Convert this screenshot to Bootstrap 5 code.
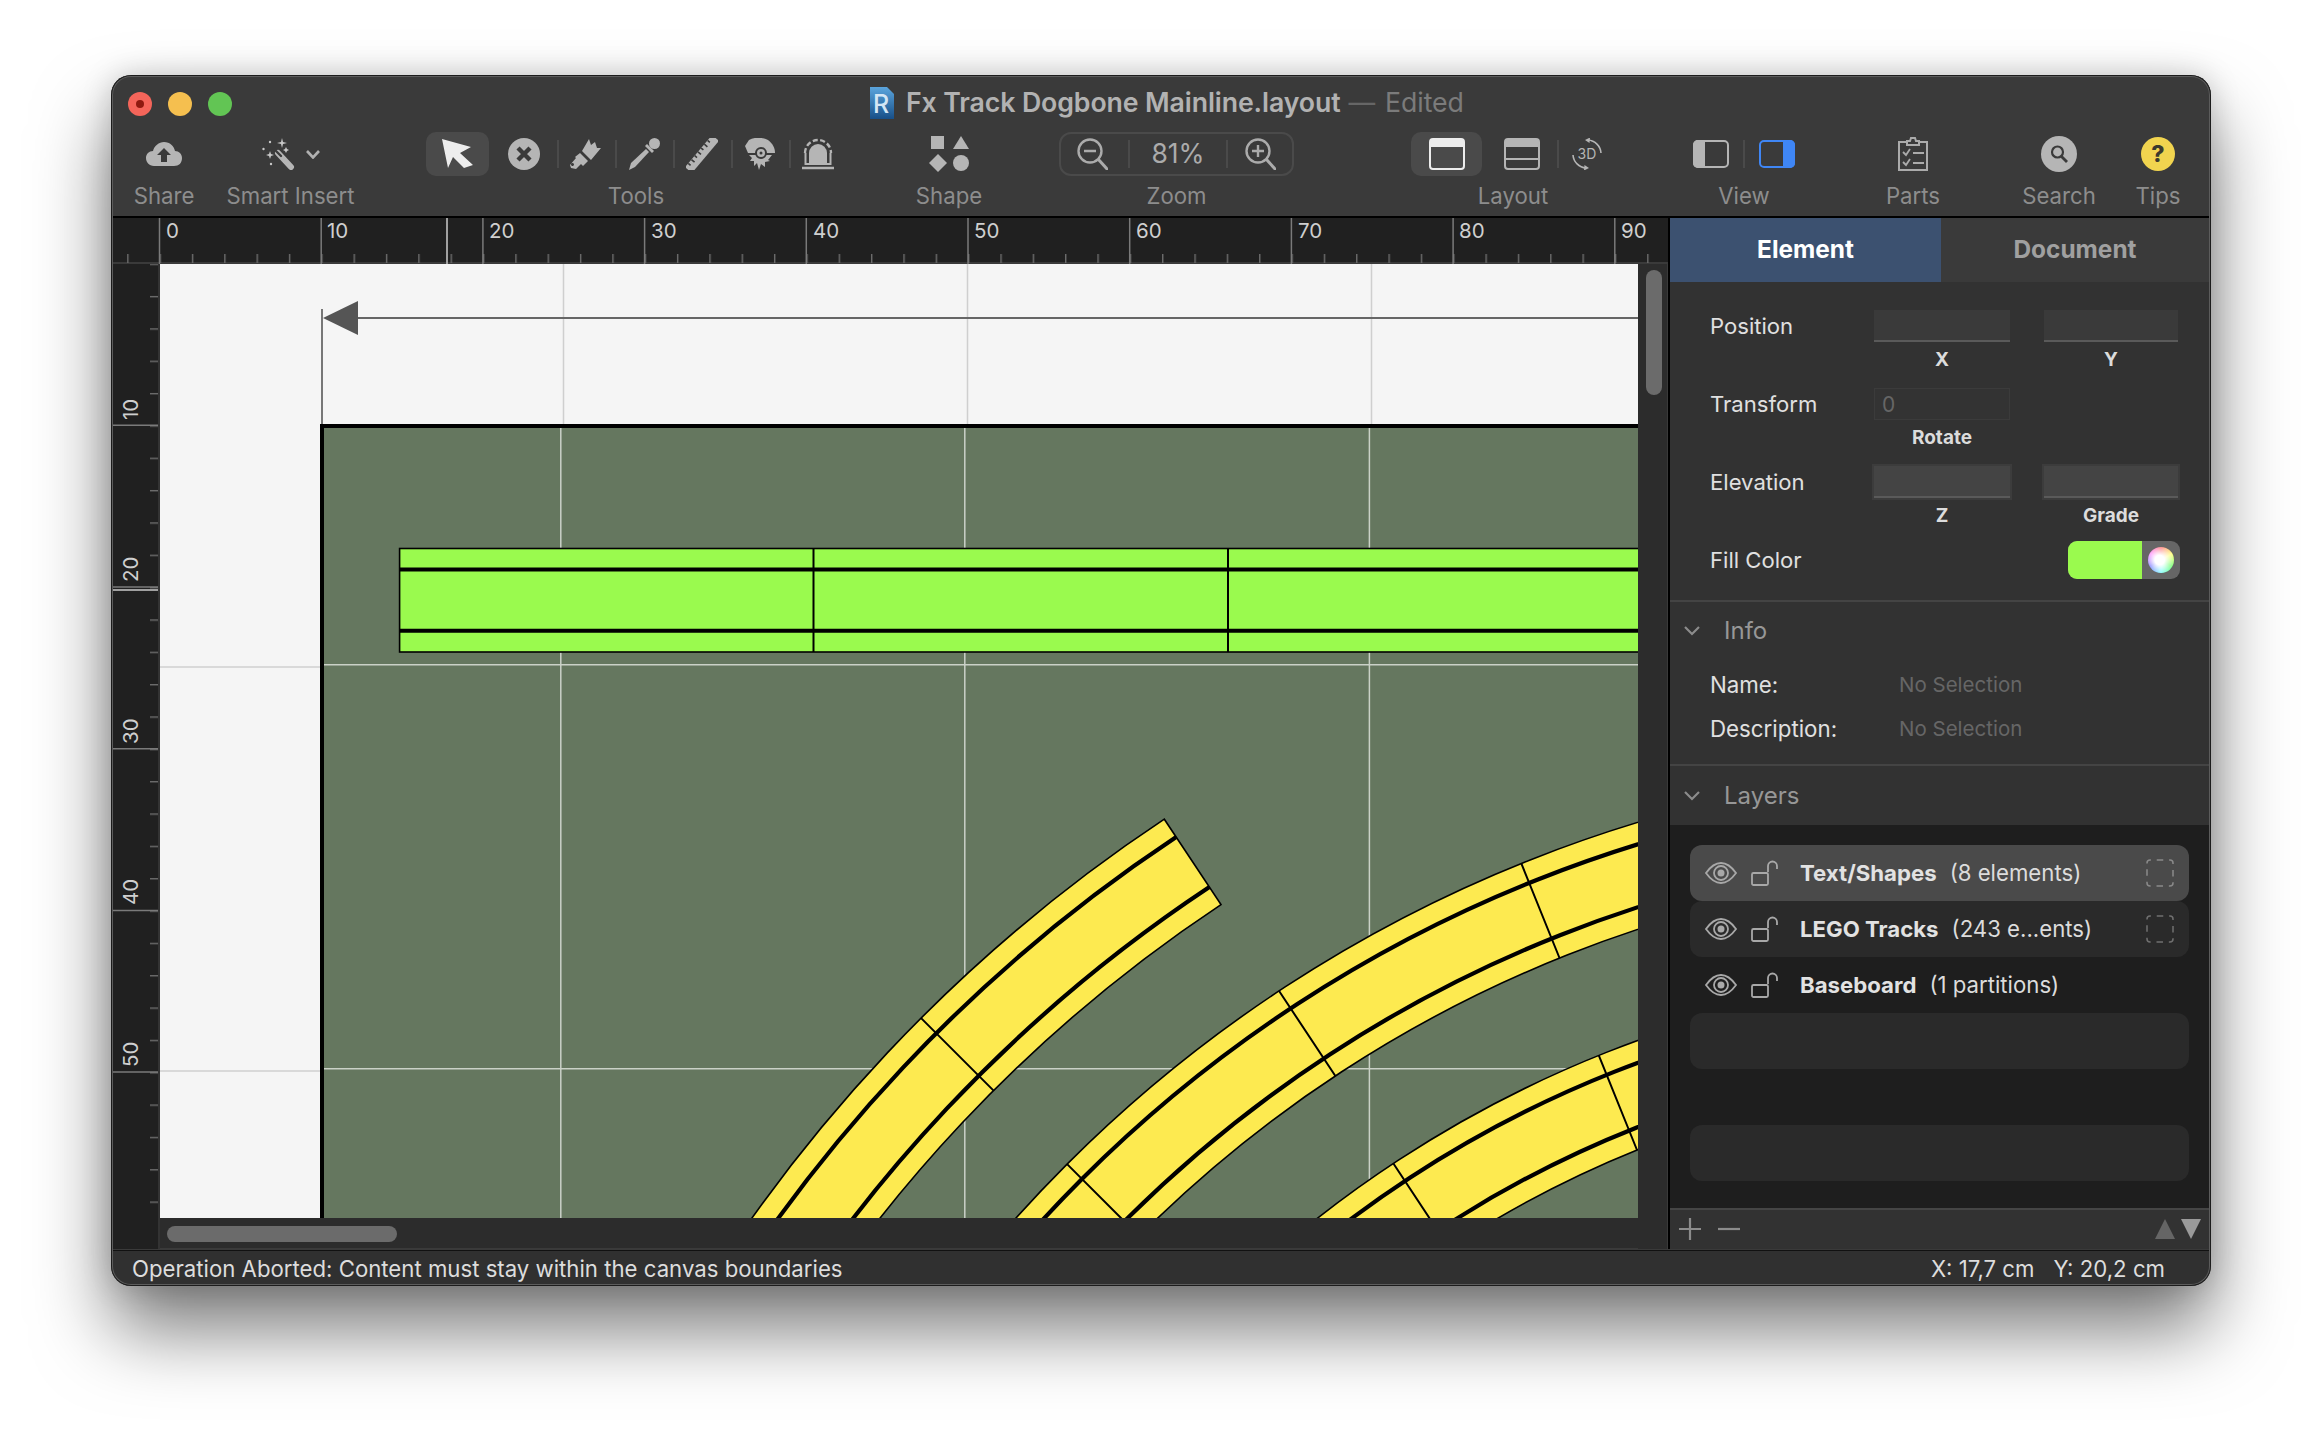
<!DOCTYPE html>
<html lang="en">
<head>
<meta charset="utf-8">
<title>Fx Track Dogbone Mainline.layout</title>
<link href="https://cdn.jsdelivr.net/npm/bootstrap@5.3.0/dist/css/bootstrap.min.css" rel="stylesheet">
<style>
html,body{background:#fff;margin:0;height:100%;overflow:hidden}
body{font-family:Inter,"Liberation Sans",sans-serif;font-size:22px;color:#ddd;padding:75px 111px 0 111px}
svg{display:block;flex:none}
.win{width:2100px;height:1211px;border-radius:20px;background:#3a3a3a;position:relative;overflow:hidden}
.shadowbox{width:2100px;height:1211px;border-radius:20px;box-shadow:0 44px 76px rgba(0,0,0,.52),0 0 30px rgba(0,0,0,.18)}
.edge{position:absolute;inset:0;border-radius:20px;box-shadow:inset 0 0 0 1px #1c1c1c,inset 0 0 0 2px #5c5c5c;pointer-events:none;z-index:5}
.toolbar{height:143px;background:#3a3a3a;border-bottom:2px solid #000}
.titlerow{height:57px;padding-left:17px}
.lamp{width:24px;height:24px;border-radius:50%;margin-right:16px;display:flex;align-items:center;justify-content:center}
.lamp-r{background:#f4655a}.lamp-r::after{content:"";width:8px;height:8px;border-radius:50%;background:#8e1a10}
.lamp-y{background:#f5bf4f}.lamp-g{background:#62c554}
.docicon{margin:0 0 2px 622px}
.doctitle{margin:0 0 3px 12px;font-size:26.7px;font-weight:600;color:#b2b2b2;letter-spacing:-.1px;line-height:32px;white-space:nowrap}
.doctitle .dash{color:#666;font-weight:400;margin:0 10px 0 8px}
.doctitle .edited{color:#7b7b7b;font-weight:400}
.toolsrow{padding-left:23px}
.tg{display:flex;flex-direction:column;align-items:center}
.tg-icons{height:44px;display:flex;align-items:center;align-self:stretch}
.tg-label{margin-top:7px;line-height:26px;font-size:22.2px;color:#8d8d8d;white-space:nowrap}
.tsep{width:2px;height:28px;background:#4a4a4a;flex:none}
.g-share{width:60px}.g-share .tg-icons{padding-left:12px}
.g-smart{width:129px;margin-left:32px}.g-smart .tg-icons{padding-left:36px}
.g-tools{width:420px;margin-left:71px}
.g-shape{width:60px;margin-left:73px}.g-shape .tg-icons{padding-left:10px}
.g-zoom{width:235px;margin-left:80px}
.g-layout{width:204px;margin-left:117px}
.g-view{width:102px;margin-left:78px}
.g-parts{width:60px;margin-left:88px}.g-parts .tg-icons{padding-left:15px}
.g-search{width:70px;margin-left:81px}.g-search .tg-icons{padding-left:17px}
.g-tips{width:50px;margin-left:39px}.g-tips .tg-icons{padding-left:8px}
.picked{width:63px;height:44px;border-radius:10px;background:#4a4a4a;display:flex;align-items:center;justify-content:center;flex:none}
.picked-w{width:71px}
.ms11{margin-left:11px}.ms12{margin-left:12px}.ms13{margin-left:13px}.ms14{margin-left:14px}.ms17{margin-left:17px}.ms19{margin-left:19px}.ms22{margin-left:22px}
.zoombox{width:235px;height:44px;border:2px solid #4a4a4a;border-radius:12px;padding-left:16px;display:flex;align-items:center}
.zoomval{width:96px;text-align:center;font-size:26.5px;color:#ababab}
.zs1{margin-left:20px}
.workarea{height:1031px}
.stage{width:1557px;display:grid;grid-template-columns:49px 1478px 30px;grid-template-rows:46px 954px 31px;background:#202020}
.ruler-top{grid-column:1/4;grid-row:1}
.ruler-left{grid-column:1;grid-row:2/4}
.sheet{grid-column:2;grid-row:2;overflow:hidden;background:#f5f5f5}
.vbar{grid-column:3;grid-row:2/4;background:#2c2c2c;padding:6px 6px 0 8px;border-right:1px solid #3a3a3a}
.hbar{grid-column:2;grid-row:3;background:#2c2c2c;padding:8px 0 0 7px;border-bottom:1px solid #3a3a3a}
.vthumb{width:16px;height:125px;border-radius:8px;background:#6b6b6b}
.hthumb{width:230px;height:16px;border-radius:8px;background:#6b6b6b}
.rl{font-family:Inter,"Liberation Sans",sans-serif;font-size:20.5px;fill:#cfcfcf}
.panel{width:541px;border-left:2px solid #000;background:#323232;display:flex;flex-direction:column}
.tabbar{height:64px}
.tabx{display:flex;align-items:center;justify-content:center;font-weight:700;font-size:24.4px;padding-bottom:2px}
.tabx-on{width:271px;background:#3c5170;color:#fff}
.tabx-off{flex:1;background:#3a3a3a;color:#a0a0a0}
.form-area{padding:28px 0 0 40px}
.frow{display:flex;height:78px}
.frow-last{height:56px}
.flabel{width:164px;line-height:32px;font-size:22.1px;color:#e0e0e0}
.fcell{width:136px}
.fcell2{width:134px;margin-left:34px}
.finput{display:block;width:100%;height:32px;padding:0 7px;border:0;border-radius:0;background:#3a3a3a;border-bottom:2px solid #5a5a5a;font-size:21px;color:#666;font-family:inherit}
.finput-off{background:#333;border:1px solid #3b3b3b}
.finput-box{background:#444;box-shadow:0 0 0 2px #3c3c3c}
.fsub{margin-top:8px;line-height:20px;text-align:center;font-weight:700;font-size:19px;color:#dcdcdc}
.swatch{width:112px;height:38px;margin:-3px 0 0 194px;border-radius:9px;overflow:hidden;display:flex;background:#666}
.swatch-c{width:74px;background:#9afa4e}
.swatch-w{flex:1;display:flex;align-items:center;justify-content:center}
.wheel{width:26px;height:26px;border-radius:50%;background:radial-gradient(circle at 45% 50%,#fff 0,#fff 25%,rgba(255,255,255,0) 85%),conic-gradient(#f66,#ff6,#6f6,#6ff,#55f,#f6f,#f66)}
.sec{border-top:2px solid #444}
.sechead{height:58px;padding-left:14px;font-size:24px;color:#979797}
.sechead svg{margin-right:24px}
.sechead-l{height:59px}
.inforow{padding-left:40px;height:44px}
.ilabel{width:189px;font-size:22.3px;color:#e0e0e0}
.ival{font-size:20.5px;color:#666}
.infobody{padding:3px 0 13px}
.layers{height:383px;background:#1e1e1e;padding:20px 20px 0}
.lrow{height:56px;border-radius:12px;display:flex;align-items:center;padding-left:15px;font-size:22.2px;color:#e2e2e2}
.lrow-sel{background:#4a4a4a}
.lrow-alt{background:#2a2a2a}
.lname{font-weight:700;margin-left:22px}
.lnote{margin-left:13px;color:#dcdcdc}
.lbox{margin-left:auto;margin-right:15px}
.ms-lock{margin-left:14px}
.pfoot{height:40px;border-top:2px solid #454545;padding-left:9px;background:#323232}
.sbar{height:38px;border-top:1px solid #111;margin-top:1px;background:#303030;padding:0 46px 2px 21px;font-size:22.2px;color:#ddd}
.sbar .xy{margin-right:19px}
</style>
</head>
<body>
<div class="shadowbox">
<div class="win d-flex flex-column">
  <div class="edge"></div>
  <header class="toolbar flex-shrink-0">
    <div class="titlerow d-flex align-items-center">
      <span class="lamp lamp-r"></span><span class="lamp lamp-y"></span><span class="lamp lamp-g"></span>
      <svg class="docicon" width="24" height="32" viewBox="0 0 24 32">
        <defs><linearGradient id="docg" x1="0" y1="0" x2="0" y2="1"><stop offset="0" stop-color="#5ba5dd"/><stop offset="1" stop-color="#174f88"/></linearGradient></defs>
        <path d="M0 0H17L24 7V32H0Z" fill="url(#docg)"/>
        <text x="3" y="26" font-family="Inter,sans-serif" font-size="25" font-weight="500" fill="#d3e6f5">R</text>
      </svg>
      <div class="doctitle">Fx Track Dogbone Mainline.layout<span class="dash">—</span><span class="edited">Edited</span></div>
    </div>
    <div class="toolsrow d-flex">
      <div class="tg g-share">
        <div class="tg-icons">
          <svg width="36" height="24" viewBox="0 0 36 24"><path d="M8 24C3 24 0 20 0 16C0 12 3 9 7 9C8 4 13 0 18 0C24 0 28 4 29 9C33 9 36 12 36 16C36 21 33 24 28 24Z" fill="#b5b5b5"/><path d="M18 6L25 13H21V20H15V13H11Z" fill="#3a3a3a"/></svg>
        </div>
        <div class="tg-label">Share</div>
      </div>
      <div class="tg g-smart">
        <div class="tg-icons">
          <svg width="33" height="32" viewBox="0 0 33 32"><path d="M16 15L29 29" stroke="#b5b5b5" stroke-width="6" stroke-linecap="round"/><path d="M14 13L19 18" stroke="#3a3a3a" stroke-width="2.4" stroke-linecap="round"/><g fill="#c8c8c8"><path d="M20 0L21 4L25 5L21 6L20 10L19 6L15 5L19 4Z"/><path d="M8 13L9 16L12 17L9 18L8 21L7 18L4 17L7 16Z"/><path d="M24 9L25 11L27 12L25 13L24 15L23 13L21 12L23 11Z"/><circle cx="8" cy="4" r="1.2"/><circle cx="1.5" cy="11" r="1.2"/><circle cx="9" cy="26" r="1.2"/></g></svg>
          <svg class="ms11" width="14" height="9" viewBox="0 0 14 9"><path d="M1 1L7 7.5L13 1" fill="none" stroke="#b0b0b0" stroke-width="2.6"/></svg>
        </div>
        <div class="tg-label">Smart Insert</div>
      </div>
      <div class="tg g-tools">
        <div class="tg-icons">
          <div class="picked"><svg width="31" height="30" viewBox="0 0 31 30"><path d="M0 0L29 8L18 14L31 26L22 29L11 18L6 29Z" fill="#ededed"/></svg></div>
          <svg class="ms19" width="32" height="32" viewBox="0 0 32 32"><circle cx="16" cy="16" r="16" fill="#b5b5b5"/><path d="M10 10L22 22M22 10L10 22" stroke="#3a3a3a" stroke-width="4.4"/></svg>
          <span class="tsep ms17"></span>
          <svg class="ms11" width="32" height="30" viewBox="0 0 32 30"><g fill="#b5b5b5"><path d="M12 12L19 0L21 6L25 3L27 9L31 9L21 21Z"/><path fill-rule="evenodd" d="M10 14L18 22L13 27L11 25L6 30L1 29L0 26L6 19L5 18ZM4 25.500A1.500 1.500 0 1 0 4 25.510Z"/></g></svg>
          <span class="tsep ms13"></span>
          <svg class="ms11" width="32" height="32" viewBox="0 0 32 32"><g fill="#b5b5b5"><circle cx="26.500" cy="5.500" r="5.500"/><path d="M17 8L19 6L26 13L24 15Z"/><path d="M18 11L21 14L7 29L1 32L3 25Z"/></g></svg>
          <span class="tsep ms13"></span>
          <svg class="ms11" width="32" height="32" viewBox="0 0 32 32"><g transform="translate(16 16) rotate(-50)"><rect x="-21" y="-4.500" width="42" height="9" fill="#b5b5b5"/><path d="M-16-4.500v3M-11-4.500v4M-6-4.500v3M-1-4.500v4M4-4.500v3M9-4.500v4M14-4.500v3" stroke="#3a3a3a" stroke-width="1.600"/></g></svg>
          <span class="tsep ms13"></span>
          <svg class="ms11" width="32" height="32" viewBox="0 0 32 32"><g fill="#b5b5b5"><path d="M1 8L5 2C10-1 18-1 24 2C29 6 31 10 31 15L4 15Z"/><path d="M5 17H28L24 22L26 23L21 24L21 29L17 26L15 32L13 25L10 28L10 23L6 23L8 20Z"/></g><circle cx="17" cy="15" r="5" fill="#b5b5b5" stroke="#3a3a3a" stroke-width="2"/><circle cx="17" cy="15" r="1.5" fill="#3a3a3a"/></svg>
          <span class="tsep ms13"></span>
          <svg class="ms11" width="32" height="32" viewBox="0 0 32 32"><path d="M3 15A13 13 0 0 1 29 15" fill="none" stroke="#b5b5b5" stroke-width="2.4" stroke-dasharray="5 2.5"/><path d="M7 25V15A9 9 0 0 1 25 15V25Z" fill="#b5b5b5"/><path d="M3.500 15V26H28.500V15" fill="none" stroke="#b5b5b5" stroke-width="2"/><path d="M0 30H32" stroke="#b5b5b5" stroke-width="2.5"/></svg>
        </div>
        <div class="tg-label">Tools</div>
      </div>
      <div class="tg g-shape">
        <div class="tg-icons">
          <svg width="40" height="36" viewBox="0 0 40 36"><g fill="#b5b5b5"><rect x="2" y="0" width="13" height="13"/><path d="M32 0L40 13H24Z"/><path d="M9 18L18 27L9 36L0 27Z"/><circle cx="32" cy="27" r="8"/></g></svg>
        </div>
        <div class="tg-label">Shape</div>
      </div>
      <div class="tg g-zoom">
        <div class="zoombox">
          <svg width="31" height="32" viewBox="0 0 31 32"><circle cx="13" cy="13" r="11.500" fill="none" stroke="#ababab" stroke-width="2.4"/><path d="M21 21L31 32" stroke="#ababab" stroke-width="3"/><path d="M7 13H19" stroke="#ababab" stroke-width="2.400"/></svg>
          <span class="tsep zs1"></span>
          <span class="zoomval">81%</span>
          <span class="tsep"></span>
          <svg class="ms17" width="31" height="32" viewBox="0 0 31 32"><circle cx="13" cy="13" r="11.500" fill="none" stroke="#ababab" stroke-width="2.4"/><path d="M21 21L31 32" stroke="#ababab" stroke-width="3"/><path d="M7 13H19M13 7V19" stroke="#ababab" stroke-width="2.400"/></svg>
        </div>
        <div class="tg-label">Zoom</div>
      </div>
      <div class="tg g-layout">
        <div class="tg-icons">
          <div class="picked picked-w"><svg width="36" height="32" viewBox="0 0 36 32"><rect x="1" y="1" width="34" height="30" rx="3" fill="none" stroke="#ececec" stroke-width="2"/><path d="M1 4A3 3 0 0 1 4 1H32A3 3 0 0 1 35 4V9H1Z" fill="#ececec"/></svg></div>
          <svg class="ms22" width="36" height="32" viewBox="0 0 36 32"><rect x="1" y="1" width="34" height="30" rx="3" fill="none" stroke="#b5b5b5" stroke-width="2"/><path d="M1 4A3 3 0 0 1 4 1H32A3 3 0 0 1 35 4V9H1Z" fill="#b5b5b5"/><path d="M1 21H35" stroke="#b5b5b5" stroke-width="2"/></svg>
          <span class="tsep ms17"></span>
          <svg class="ms12" width="32" height="32" viewBox="0 0 32 32"><text x="16" y="21" text-anchor="middle" font-family="Inter,sans-serif" font-size="14" fill="#b5b5b5">3D</text><path d="M17 2A14 14 0 0 1 30 15M15 30A14 14 0 0 1 2 17" fill="none" stroke="#b5b5b5" stroke-width="1.6"/><path d="M14 2L19 -0.500L18.500 5ZM18 30L13 32.500L13.500 27Z" fill="#b5b5b5"/></svg>
        </div>
        <div class="tg-label">Layout</div>
      </div>
      <div class="tg g-view">
        <div class="tg-icons">
          <svg width="36" height="28" viewBox="0 0 36 28"><rect x="1" y="1" width="34" height="26" rx="4" fill="none" stroke="#b5b5b5" stroke-width="2"/><path d="M5 0H12V28H5A5 5 0 0 1 0 23V5A5 5 0 0 1 5 0Z" fill="#b5b5b5"/></svg>
          <span class="tsep ms14"></span>
          <svg class="ms14" width="36" height="28" viewBox="0 0 36 28"><rect x="1" y="1" width="34" height="26" rx="4" fill="none" stroke="#3f86f5" stroke-width="2"/><path d="M24 0H31A5 5 0 0 1 36 5V23A5 5 0 0 1 31 28H24Z" fill="#3f86f5"/></svg>
        </div>
        <div class="tg-label">View</div>
      </div>
      <div class="tg g-parts">
        <div class="tg-icons">
          <svg width="30" height="34" viewBox="0 0 30 34"><path d="M9 5H1V33H29V5H21" fill="none" stroke="#ababab" stroke-width="2"/><path d="M9 8V4H12L13 1H17L18 4H21V8Z" fill="none" stroke="#ababab" stroke-width="2"/><path d="M5 15L8 18L12 12M5 25L8 28L12 22" fill="none" stroke="#ababab" stroke-width="1.800"/><path d="M15 16H26M15 26H26" stroke="#ababab" stroke-width="2"/></svg>
        </div>
        <div class="tg-label">Parts</div>
      </div>
      <div class="tg g-search">
        <div class="tg-icons">
          <svg width="36" height="36" viewBox="0 0 36 36"><circle cx="18" cy="18" r="18" fill="#b5b5b5"/><circle cx="16.500" cy="16" r="5.500" fill="none" stroke="#3a3a3a" stroke-width="2.200"/><path d="M20.500 20.500L26 26" stroke="#3a3a3a" stroke-width="2.800"/></svg>
        </div>
        <div class="tg-label">Search</div>
      </div>
      <div class="tg g-tips">
        <div class="tg-icons">
          <svg width="34" height="34" viewBox="0 0 34 34"><circle cx="17" cy="17" r="17" fill="#f1d44f"/><text x="17" y="25" text-anchor="middle" font-family="Inter,sans-serif" font-size="23" font-weight="800" fill="#3b3a2e">?</text></svg>
        </div>
        <div class="tg-label">Tips</div>
      </div>
    </div>
  </header>

  <div class="workarea d-flex">
    <div class="stage">
      <svg class="ruler-top" width="1557" height="46" viewBox="111 218 1557 46">
        <defs><pattern id="tx" patternUnits="userSpaceOnUse" x="159.5" y="254" width="32.34" height="10"><rect width="1.4" height="10" fill="#6c6c6c"/></pattern></defs>
        <rect x="111" y="262" width="1557" height="2" fill="#3a3a3a"/>
        <rect x="111" y="254" width="1557" height="9" fill="url(#tx)"/>
        <path d="M159.500 218V264M321.200 218V264M482.900 218V264M644.600 218V264M806.300 218V264M968 218V264M1129.700 218V264M1291.400 218V264M1453.100 218V264M1614.800 218V264" stroke="#7a7a7a" stroke-width="1.500"/>
        <path d="M447 218V264" stroke="#a0a0a0" stroke-width="2"/>
        <g class="rl">
          <text x="166" y="238">0</text><text x="327" y="238">10</text><text x="489" y="238">20</text><text x="651" y="238">30</text><text x="813" y="238">40</text><text x="974" y="238">50</text><text x="1136" y="238">60</text><text x="1298" y="238">70</text><text x="1459" y="238">80</text><text x="1621" y="238">90</text>
        </g>
      </svg>
      <svg class="ruler-left" width="49" height="985" viewBox="111 264 49 985">
        <defs><pattern id="ty" patternUnits="userSpaceOnUse" x="150" y="263.600" width="10" height="32.34"><rect width="10" height="1.4" fill="#6c6c6c"/></pattern></defs>
        <rect x="150" y="264" width="10" height="954" fill="url(#ty)"/>
        <path d="M113 425.300H160M113 587H160M113 748.700H160M113 910.400H160M113 1072.100H160" stroke="#7a7a7a" stroke-width="1.500"/>
        <path d="M113 590H160" stroke="#a0a0a0" stroke-width="2"/>
        <path d="M159 264V1249" stroke="#333" stroke-width="2"/>
        <g class="rl">
          <text transform="translate(138 420) rotate(-90)">10</text><text transform="translate(138 582) rotate(-90)">20</text><text transform="translate(138 744) rotate(-90)">30</text><text transform="translate(138 905) rotate(-90)">40</text><text transform="translate(138 1067) rotate(-90)">50</text>
        </g>
      </svg>
      <div class="sheet">
        <svg width="1478" height="954" viewBox="160 264 1478 954">
          <path d="M563.500 264V424M967.500 264V424M1371.500 264V424M160 667H320M160 1071H320" stroke="#cfcfcf" stroke-width="1.500"/>
          <path d="M322 309V425" stroke="#777" stroke-width="2"/>
          <path d="M358 318H1640" stroke="#666" stroke-width="2"/>
          <path d="M323 318L358 301V335Z" fill="#555"/>
          <rect x="322" y="426" width="1400" height="900" fill="#65775f" stroke="#000" stroke-width="4"/>
          <path d="M560.800 428V1218M964.800 428V1218M1369.400 428V1218M324 664.700H1638M324 1068.800H1638" stroke="#e4e8e2" stroke-width="1.500" opacity=".8"/>
          <g>
            <rect x="399.600" y="548.500" width="1300" height="103.500" fill="#9afa4e" stroke="#000" stroke-width="1.600"/>
            <path d="M813.500 548V652M1228 548V652" stroke="#000" stroke-width="2"/>
            <path d="M399 569.600H1638M399 630.800H1638" stroke="#000" stroke-width="4"/>
          </g>
          <g fill="none" stroke="#000">
            <circle cx="2033" cy="2130" r="1315" stroke="#fdea50" stroke-width="102"/>
            <circle cx="2033" cy="2130" r="1366" stroke-width="1.600"/>
            <circle cx="2033" cy="2130" r="1264" stroke-width="1.600"/>
            <circle cx="2033" cy="2130" r="1345" stroke-width="4.200"/>
            <circle cx="2033" cy="2130" r="1285" stroke-width="4.200"/>
            <circle cx="2033" cy="2130" r="1108" stroke="#fdea50" stroke-width="102"/>
            <circle cx="2033" cy="2130" r="1159" stroke-width="1.600"/>
            <circle cx="2033" cy="2130" r="1057" stroke-width="1.600"/>
            <circle cx="2033" cy="2130" r="1138" stroke-width="4.200"/>
            <circle cx="2033" cy="2130" r="1078" stroke-width="4.200"/>
            <path d="M671.200 1343.800A1572.500 1572.500 0 0 1 1164.300 819.200L1221 904.600A1470 1470 0 0 0 760 1395Z" fill="#fdea50" stroke-width="1.600"/>
            <path d="M689.800 1354.500A1551 1551 0 0 1 1176.200 837.100M741.800 1384.500A1491 1491 0 0 1 1209.400 887.100" stroke-width="4.200"/>
            <path d="M921.100 1018.100L993.600 1090.600M1067.100 1164.100L1139.200 1236.200M1279.100 991L1335.400 1076M1521.300 863.400L1559.500 958M1393.400 1163.500L1449.600 1248.600M1598.800 1055.400L1637 1150" stroke-width="2"/>
          </g>
        </svg>
      </div>
      <div class="vbar"><div class="vthumb"></div></div>
      <div class="hbar"><div class="hthumb"></div></div>
    </div>

    <aside class="panel">
      <div class="tabbar d-flex flex-shrink-0">
        <div class="tabx tabx-on">Element</div>
        <div class="tabx tabx-off">Document</div>
      </div>
      <div class="form-area">
        <div class="frow">
          <div class="flabel">Position</div>
          <div class="fcell"><input class="finput" aria-label="X"><div class="fsub">X</div></div>
          <div class="fcell2"><input class="finput" aria-label="Y"><div class="fsub">Y</div></div>
        </div>
        <div class="frow">
          <div class="flabel">Transform</div>
          <div class="fcell"><input class="finput finput-off" value="0" aria-label="Rotate"><div class="fsub">Rotate</div></div>
        </div>
        <div class="frow">
          <div class="flabel">Elevation</div>
          <div class="fcell"><input class="finput finput-box" aria-label="Z"><div class="fsub">Z</div></div>
          <div class="fcell2"><input class="finput finput-box" aria-label="Grade"><div class="fsub">Grade</div></div>
        </div>
        <div class="frow frow-last">
          <div class="flabel">Fill Color</div>
          <div class="swatch"><div class="swatch-c"></div><div class="swatch-w"><div class="wheel"></div></div></div>
        </div>
      </div>
      <div class="sec">
        <div class="sechead d-flex align-items-center">
          <svg width="16" height="10" viewBox="0 0 16 10"><path d="M1 1L8 8L15 1" fill="none" stroke="#8c8c8c" stroke-width="2.200"/></svg>
          <span>Info</span>
        </div>
        <div class="infobody">
          <div class="inforow d-flex align-items-center"><span class="ilabel">Name:</span><span class="ival">No Selection</span></div>
          <div class="inforow d-flex align-items-center"><span class="ilabel">Description:</span><span class="ival">No Selection</span></div>
        </div>
      </div>
      <div class="sec">
        <div class="sechead sechead-l d-flex align-items-center">
          <svg width="16" height="10" viewBox="0 0 16 10"><path d="M1 1L8 8L15 1" fill="none" stroke="#8c8c8c" stroke-width="2.200"/></svg>
          <span>Layers</span>
        </div>
      </div>
      <div class="layers">
        <div class="lrow lrow-sel">
          <svg width="32" height="22" viewBox="0 0 32 22"><path d="M1 11C6 4 11 1 16 1C21 1 26 4 31 11C26 18 21 21 16 21C11 21 6 18 1 11Z" fill="none" stroke="#a8a8a8" stroke-width="1.800"/><circle cx="16" cy="11" r="7" fill="none" stroke="#a8a8a8" stroke-width="1.800"/><circle cx="16" cy="11" r="3.500" fill="#a8a8a8"/></svg>
          <svg class="ms-lock" width="27" height="26" viewBox="0 0 27 26"><rect x="1" y="13" width="16" height="12" rx="1.500" fill="none" stroke="#a8a8a8" stroke-width="1.800"/><path d="M17 12V6A4.500 4.500 0 0 1 26 6V9" fill="none" stroke="#a8a8a8" stroke-width="1.800"/></svg>
          <span class="lname">Text/Shapes</span><span class="lnote">(8 elements)</span>
          <svg class="lbox" width="28" height="28" viewBox="0 0 28 28"><rect x="1" y="1" width="26" height="26" rx="3" fill="none" stroke="#8a8a8a" stroke-width="1.500" stroke-dasharray="6.500 5.860" stroke-dashoffset="-6.750"/></svg>
        </div>
        <div class="lrow lrow-alt">
          <svg width="32" height="22" viewBox="0 0 32 22"><path d="M1 11C6 4 11 1 16 1C21 1 26 4 31 11C26 18 21 21 16 21C11 21 6 18 1 11Z" fill="none" stroke="#a8a8a8" stroke-width="1.800"/><circle cx="16" cy="11" r="7" fill="none" stroke="#a8a8a8" stroke-width="1.800"/><circle cx="16" cy="11" r="3.500" fill="#a8a8a8"/></svg>
          <svg class="ms-lock" width="27" height="26" viewBox="0 0 27 26"><rect x="1" y="13" width="16" height="12" rx="1.500" fill="none" stroke="#a8a8a8" stroke-width="1.800"/><path d="M17 12V6A4.500 4.500 0 0 1 26 6V9" fill="none" stroke="#a8a8a8" stroke-width="1.800"/></svg>
          <span class="lname">LEGO Tracks</span><span class="lnote">(243 e...ents)</span>
          <svg class="lbox" width="28" height="28" viewBox="0 0 28 28"><rect x="1" y="1" width="26" height="26" rx="3" fill="none" stroke="#707070" stroke-width="1.500" stroke-dasharray="6.500 5.860" stroke-dashoffset="-6.750"/></svg>
        </div>
        <div class="lrow">
          <svg width="32" height="22" viewBox="0 0 32 22"><path d="M1 11C6 4 11 1 16 1C21 1 26 4 31 11C26 18 21 21 16 21C11 21 6 18 1 11Z" fill="none" stroke="#a8a8a8" stroke-width="1.800"/><circle cx="16" cy="11" r="7" fill="none" stroke="#a8a8a8" stroke-width="1.800"/><circle cx="16" cy="11" r="3.500" fill="#a8a8a8"/></svg>
          <svg class="ms-lock" width="27" height="26" viewBox="0 0 27 26"><rect x="1" y="13" width="16" height="12" rx="1.500" fill="none" stroke="#a8a8a8" stroke-width="1.800"/><path d="M17 12V6A4.500 4.500 0 0 1 26 6V9" fill="none" stroke="#a8a8a8" stroke-width="1.800"/></svg>
          <span class="lname">Baseboard</span><span class="lnote">(1 partitions)</span>
        </div>
        <div class="lrow lrow-alt"></div>
        <div class="lrow"></div>
        <div class="lrow lrow-alt"></div>
      </div>
      <div class="pfoot d-flex align-items-center">
        <svg width="22" height="22" viewBox="0 0 22 22"><path d="M11 0V22M0 11H22" stroke="#8c8c8c" stroke-width="2.200"/></svg>
        <svg class="ms17" width="22" height="4" viewBox="0 0 22 4"><path d="M0 2H22" stroke="#8c8c8c" stroke-width="2.200"/></svg>
        <svg class="ms-auto me-2" width="46" height="21" viewBox="0 0 46 21"><path d="M10 0L20 20H0Z" fill="#656565"/><path d="M26 0H46L36 20Z" fill="#9a9a9a"/></svg>
      </div>
    </aside>
  </div>

  <footer class="sbar d-flex align-items-center justify-content-between flex-shrink-0">
    <span>Operation Aborted: Content must stay within the canvas boundaries</span>
    <span><span class="xy">X: 17,7 cm</span><span>Y: 20,2 cm</span></span>
  </footer>
</div>
</div>
</body>
</html>
